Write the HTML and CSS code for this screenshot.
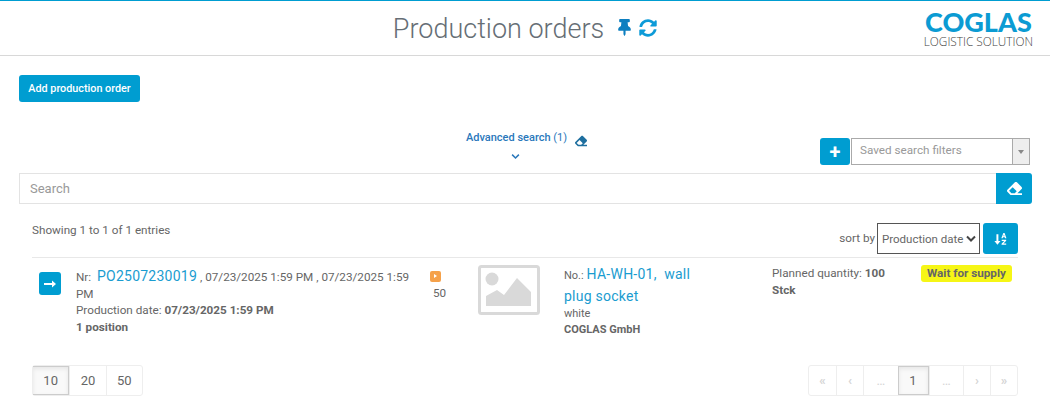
FILE: index.html
```html
<!DOCTYPE html>
<html lang="en">
<head>
    <meta charset="UTF-8">
    <title>Production orders</title>
    <link rel="stylesheet" href="styles.css">
</head>
<body>
    <header class="topbar">
        <div class="title">
            <h1>Production orders</h1>
            <svg class="icon-pin" viewBox="0 0 384 512"><path d="M298 214L286 96h42c13 0 24-11 24-24V24c0-13-11-24-24-24H56C43 0 32 11 32 24v48c0 13 11 24 24 24h42L86 214C37 237 0 277 0 328c0 13 11 24 24 24h136v104c0 1 0 2 1 4l24 48c3 6 11 6 14 0l24-48c1-2 1-3 1-4V352h136c13 0 24-11 24-24 0-51-38-91-86-114z"/></svg>
            <svg class="icon-sync" viewBox="0 0 512 512"><path d="M370.72 133.28C339.458 104.008 298.888 87.962 255.848 88c-77.458.068-144.328 53.178-162.791 126.85-1.344 5.363-6.122 9.15-11.651 9.15H24.103c-7.498 0-13.194-6.807-11.807-14.176C33.933 94.924 134.813 8 256 8c66.448 0 126.791 26.136 171.315 68.685L463.03 40.97C478.149 25.851 504 36.559 504 57.941V192c0 13.255-10.745 24-24 24H345.941c-21.382 0-32.09-25.851-16.971-40.971l41.75-41.749zM32 296h134.059c21.382 0 32.09 25.851 16.971 40.971l-41.75 41.75c31.262 29.273 71.835 45.319 114.876 45.28 77.418-.07 144.315-53.144 162.787-126.849 1.344-5.363 6.122-9.15 11.651-9.15h57.304c7.498 0 13.194 6.807 11.807 14.176C478.067 417.076 377.187 504 256 504c-66.448 0-126.791-26.136-171.315-68.685L48.97 471.03C33.851 486.149 8 475.441 8 454.059V320c0-13.255 10.745-24 24-24z"/></svg>
        </div>
        <div class="logo">
            <span class="logo-name">COGLAS</span>
            <span class="logo-sub">LOGISTIC SOLUTION</span>
        </div>
    </header>

    <main class="content">
        <button class="btn btn-add">Add production order</button>

        <div class="search-tools">
            <div class="advanced">
                <div class="advanced-link">
                    <span><b>Advanced search</b> (1)</span>
                    <svg class="icon-eraser-small" viewBox="0 0 512 512"><path d="M498 274c19-19 19-49 0-68L338 46c-19-19-49-19-68 0L14 302c-19 19-19 49 0 68l96 96a48 48 0 0 0 34 14h356c7 0 12-5 12-12v-40c0-7-5-12-12-12H356l142-142zM195 211l137 137-67 68H151l-80-80 124-125z"/></svg>
                </div>
                <svg class="icon-chevron" viewBox="0 0 12 8"><path d="M1.500 1.500L6 6l4.500-4.500" /></svg>
            </div>
            <div class="saved-filters">
                <button class="btn btn-plus">+</button>
                <div class="saved-select">
                    <span>Saved search filters</span>
                    <i class="saved-arrow"></i>
                </div>
            </div>
        </div>

        <div class="search-bar">
            <input class="search-input" type="text" placeholder="Search">
            <button class="btn btn-search">
                <svg class="icon-eraser" viewBox="0 0 512 512"><path d="M498 274c19-19 19-49 0-68L338 46c-19-19-49-19-68 0L14 302c-19 19-19 49 0 68l96 96a48 48 0 0 0 34 14h356c7 0 12-5 12-12v-40c0-7-5-12-12-12H356l142-142zM195 211l137 137-67 68H151l-80-80 124-125z"/></svg>
            </button>
        </div>

        <div class="list">
            <div class="list-head">
                <span class="entries">Showing 1 to 1 of 1 entries</span>
                <div class="sort">
                    <span>sort by</span>
                    <select class="sort-select">
                        <option>Production date</option>
                    </select>
                    <button class="btn btn-sort">
                        <svg class="icon-sort" viewBox="0 0 16 16">
                            <path d="M3 2h2.400v8.500H8L4.200 15 .5 10.500H3z"/>
                            <path d="M11.500 0.500h1.500l2.300 6.500h-1.700l-.4-1.200h-2.100l-.4 1.200H9z M12.250 2.500l-.6 2h1.200z" fill-rule="evenodd"/>
                            <path d="M9.500 9h5.500v1.300l-3.300 3.200H15V15H9.300v-1.300l3.300-3.200H9.500z"/>
                        </svg>
                    </button>
                </div>
            </div>

            <div class="order">
                <div class="order-action">
                    <button class="btn btn-open">
                        <svg class="icon-arrow" viewBox="0 0 12 8"><path d="M0 3h8V0.500L12 4 8 7.500V5H0z"/></svg>
                    </button>
                </div>
                <div class="order-info">
                    <div>Nr: &nbsp;<a class="link" href="#">PO2507230019</a> , 07/23/2025 1:59 PM , 07/23/2025 1:59 PM</div>
                    <div>Production date: <b>07/23/2025 1:59 PM</b></div>
                    <div><b>1 position</b></div>
                </div>
                <div class="order-status">
                    <span class="status-icon"></span>
                    <span class="status-count">50</span>
                </div>
                <svg class="placeholder" viewBox="0 0 62 50">
                    <rect x="1.500" y="1.500" width="59" height="47" rx="2" fill="none" stroke="#d9d9d9" stroke-width="3"/>
                    <circle cx="14" cy="14" r="6.500" fill="#d9d9d9"/>
                    <path d="M8 41V31l11-6 7 5 13-17 14 14v14z" fill="#d9d9d9"/>
                </svg>
                <div class="order-article">
                    <div class="article-name"><small>No.:</small> <a class="link" href="#">HA-WH-01, &nbsp;wall plug socket</a></div>
                    <div class="small">white</div>
                    <div class="small"><b>COGLAS GmbH</b></div>
                </div>
                <div class="order-qty">Planned quantity: <b>100 Stck</b></div>
                <div class="order-badge"><span class="badge">Wait for supply</span></div>
            </div>

            <div class="list-foot">
                <div class="pager">
                    <span class="page page-size active">10</span>
                    <span class="page page-size">20</span>
                    <span class="page page-size">50</span>
                </div>
                <div class="pager">
                    <span class="page nav">«</span>
                    <span class="page nav">‹</span>
                    <span class="page nav dots">…</span>
                    <span class="page nav num active">1</span>
                    <span class="page nav dots">…</span>
                    <span class="page nav">›</span>
                    <span class="page nav">»</span>
                </div>
            </div>
        </div>
    </main>
</body>
</html>
```

FILE: styles.css
```css
* {
    box-sizing: border-box;
}
body {
    margin: 0;
    background: #fff;
    color: #666;
    font-family: Roboto, sans-serif;
    font-size: 11.700px;
    line-height: 17px;
}
b {
    font-weight: 700;
}
.link {
    color: #1a9cd0;
    font-size: 14px;
    letter-spacing: 0.25px;
    text-decoration: none;
}
.btn {
    display: flex;
    align-items: center;
    justify-content: center;
    padding: 0;
    border: 0;
    border-radius: 3px;
    background: #009dd1;
    color: #fff;
    font-family: inherit;
}

/* header */
.topbar {
    position: relative;
    display: flex;
    justify-content: center;
    height: 56px;
    border-top: 1px solid #009dd1;
    border-bottom: 1px solid #d8d8d8;
}
.title {
    display: flex;
    align-items: center;
    margin-top: 2px;
}
.title h1 {
    margin: 0 14px 0 0;
    font-size: 27px;
    font-weight: 300;
    color: #666e75;
}
.icon-pin {
    width: 13px;
    height: 17px;
    margin-right: 8px;
    margin-top: -3px;
    fill: #0d7fc0;
}
.icon-sync {
    width: 18px;
    height: 18px;
    margin-top: -3px;
    fill: #0d9bd8;
}
.logo {
    position: absolute;
    top: 8px;
    right: 17px;
    display: flex;
    flex-direction: column;
    align-items: center;
}
.logo-name {
    font-family: Lato, sans-serif;
    font-size: 27px;
    line-height: 26px;
    font-weight: 900;
    color: #0b9bd3;
}
.logo-sub {
    font-family: "Open Sans", sans-serif;
    font-size: 11.800px;
    line-height: 13px;
    font-weight: 300;
    color: #444;
    white-space: nowrap;
}

/* page body */
.content {
    padding: 19px 18px 0 19px;
}
.btn-add {
    width: 121px;
    height: 27px;
    font-size: 10.800px;
    font-weight: 500;
}
.search-tools {
    display: flex;
    justify-content: flex-end;
    height: 35px;
    margin-top: 36px;
    position: relative;
}
.advanced {
    position: absolute;
    left: 0;
    right: 0;
    top: -9px;
    display: flex;
    flex-direction: column;
    align-items: center;
    padding-right: 20px;
    pointer-events: none;
}
.advanced-link {
    display: flex;
    align-items: center;
    gap: 8px;
    margin-left: 22px;
    color: #2a78bb;
    font-size: 11px;
    line-height: 18px;
}
.advanced-link b {
    font-weight: 500;
}
.icon-eraser-small {
    width: 12px;
    height: 12px;
    margin-top: 5px;
    fill: #1e6f9f;
}
.icon-chevron {
    width: 9px;
    height: 7px;
    margin-top: 6px;
    fill: none;
    stroke: #2a78bb;
    stroke-width: 2;
}
.saved-filters {
    display: flex;
    gap: 1px;
    margin-right: 2px;
    height: 27px;
}
.btn-plus {
    width: 30px;
    height: 27px;
    font-size: 20px;
    font-weight: 700;
}
.saved-select {
    display: flex;
    justify-content: space-between;
    width: 179px;
    border: 1px solid #aaa;
    color: #999;
    line-height: 22px;
    padding-left: 8px;
}
.saved-arrow {
    position: relative;
    width: 17px;
    border-left: 1px solid #aaa;
    background: #eee;
}
.saved-arrow::after {
    content: "";
    position: absolute;
    top: 11px;
    left: 5px;
    border: 3.500px solid transparent;
    border-top: 4px solid #888;
}
.search-bar {
    display: flex;
    height: 31px;
}
.search-input {
    flex: 1;
    padding: 0 10px;
    border: 1px solid #e3e3e3;
    border-right: 0;
    font-family: inherit;
    font-size: 13px;
    color: #666;
}
.search-input::placeholder {
    color: #999;
}
.btn-search {
    width: 36px;
    border-radius: 0 3px 3px 0;
}
.icon-eraser {
    width: 15px;
    height: 15px;
    fill: #fff;
}

/* list */
.list {
    padding: 0 14px 0 13px;
}
.list-head {
    display: flex;
    justify-content: space-between;
    height: 54px;
    padding-top: 19px;
    border-bottom: 1px solid #e8e8e8;
}
.entries {
    margin-top: -1px;
}
.sort {
    display: flex;
    gap: 2px;
    height: 31px;
    align-items: center;
}
.sort-select {
    appearance: none;
    width: 103px;
    height: 31px;
    padding: 0 0 0 4px;
    margin-right: 1px;
    border: 1px solid #555;
    border-radius: 0;
    background: #fff url("data:image/svg+xml,%3Csvg xmlns='http://www.w3.org/2000/svg' viewBox='0 0 10 7'%3E%3Cpath d='M1 1.500l4 4 4-4' fill='none' stroke='%23444' stroke-width='2'/%3E%3C/svg%3E") no-repeat right 3px center / 10px 7px;
    color: #666;
    font-family: inherit;
    font-size: 11.500px;
}
.btn-sort {
    width: 35px;
    height: 31px;
}
.icon-sort {
    width: 13px;
    height: 14px;
    fill: #fff;
}
.order {
    display: flex;
    height: 92px;
    padding-top: 9px;
}
.order-action {
    width: 44px;
    padding: 5px 0 0 7px;
}
.btn-open {
    width: 22px;
    height: 23px;
}
.icon-arrow {
    width: 12px;
    height: 8px;
    fill: #fff;
}
.order-info {
    width: 354px;
    padding: 1px 10px 0 0;
    line-height: 16.500px;
}
.order-status {
    display: flex;
    flex-direction: column;
    align-items: flex-start;
    width: 48px;
    padding-top: 4px;
}
.status-icon {
    position: relative;
    width: 11px;
    height: 11px;
    margin-bottom: 3px;
    border-radius: 2px;
    background: #f5a14a;
}
.status-icon::after {
    content: "";
    position: absolute;
    top: 3px;
    left: 4px;
    border: 2.500px solid transparent;
    border-left: 3px solid #fff;
}
.status-count {
    margin-left: 3px;
}
.placeholder {
    width: 62px;
    height: 50px;
    flex: none;
    margin-top: -2px;
}
.order-article {
    width: 232px;
    margin-top: -3px;
    padding-left: 24px;
    padding-right: 74px;
}
.article-name {
    line-height: 21px;
    margin-bottom: -2px;
}
.article-name small {
    font-size: 11px;
    line-height: 1;
}
.small {
    font-size: 11px;
    line-height: 16px;
}
.order-qty {
    width: 149px;
    margin-top: -2px;
    padding-right: 20px;
}
.order-badge {
    flex: none;
    margin-top: -2px;
}
.badge {
    display: inline-block;
    padding: 0 6px;
    border-radius: 3px;
    background: #f6f616;
    font-weight: 700;
    line-height: 17px;
    white-space: nowrap;
}

/* paging */
.list-foot {
    display: flex;
    justify-content: space-between;
    padding-top: 15px;
}
.pager {
    display: flex;
    height: 31px;
    border: 1px solid #eee;
    border-radius: 3px;
}
.page {
    display: flex;
    align-items: center;
    justify-content: center;
    border-left: 1px solid #eee;
}
.page:first-child {
    border-left: 0;
}
.page-size {
    width: 36.300px;
    font-size: 13px;
}
.active {
    border: 1px solid #ccc;
    background: #f9f9f9;
    box-shadow: inset 0 2px 4px rgba(0, 0, 0, 0.08);
}
.nav {
    width: 27px;
    color: #d5d5d5;
    font-size: 13px;
    font-weight: 700;
}
.dots {
    width: 34.500px;
    font-weight: 400;
}
.num {
    width: 31px;
    color: #666;
    font-weight: 400;
}
```
